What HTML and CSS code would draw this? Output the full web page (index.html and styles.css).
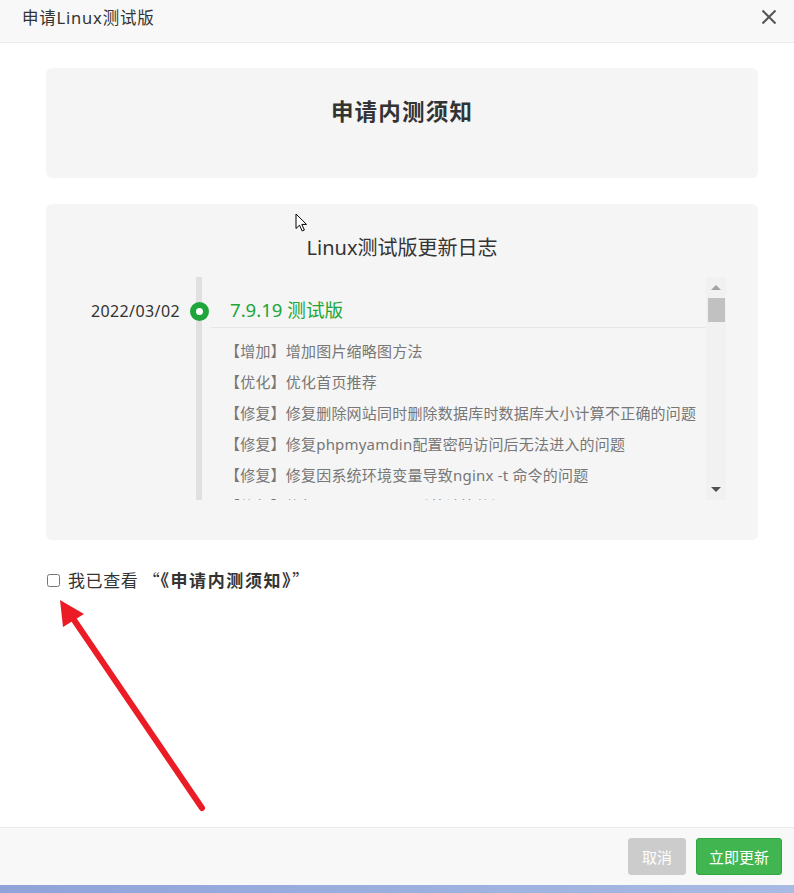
FILE: index.html
```html
<!DOCTYPE html>
<html lang="zh-CN">
<head>
<meta charset="utf-8">
<title>申请Linux测试版</title>
<link rel="stylesheet" href="styles.css">
</head>
<body>
<div class="modal">
  <div class="modal-head">
    <span class="modal-title">申请Linux测试版</span>
    <svg class="close" width="16" height="16" viewBox="0 0 16 16"><path d="M1.5 1.5 L14.5 14.5 M14.5 1.5 L1.5 14.5" stroke="#555" stroke-width="2" fill="none"/></svg>
  </div>
  <div class="modal-body">
    <div class="card card-notice">
      <h2 class="notice-title">申请内测须知</h2>
    </div>
    <div class="card card-log">
      <h3 class="log-title">Linux测试版更新日志</h3>
      <div class="log-box">
        <div class="log-date">2022/03/02</div>
        <div class="log-line"><span class="log-dot"></span></div>
        <div class="log-content">
          <div class="log-version">7.9.19 测试版</div>
          <ul class="log-items">
            <li>【增加】增加图片缩略图方法</li>
            <li>【优化】优化首页推荐</li>
            <li>【修复】修复删除网站同时删除数据库时数据库大小计算不正确的问题</li>
            <li>【修复】修复phpmyamdin配置密码访问后无法进入的问题</li>
            <li>【修复】修复因系统环境变量导致nginx -t 命令的问题</li>
            <li>【修复】修复LinuxProcess 系统计算的问题</li>
            <li>【修复】修复面板日志显示异常的问题</li>
          </ul>
        </div>
        <div class="scrollbar">
          <span class="sb-up"></span>
          <span class="sb-thumb"></span>
          <span class="sb-space"></span>
          <span class="sb-down"></span>
        </div>
      </div>
    </div>
    <label class="agree">
      <input type="checkbox" class="agree-box">
      <span>我已查看 “<b>《申请内测须知》</b>”</span>
    </label>
    <svg class="cursor" width="14" height="20" viewBox="0 0 14 20"><path d="M1 1 L1 15.5 L4.5 12.2 L7.2 18 L9.4 17 L6.8 11.4 L11.5 11.4 Z" fill="#fff" stroke="#000" stroke-width="1" stroke-linejoin="round"/></svg>
  </div>
  <div class="modal-foot">
    <button class="btn btn-cancel">取消</button>
    <button class="btn btn-ok">立即更新</button>
  </div>
</div>
<svg class="annot" width="794" height="893" viewBox="0 0 794 893">
  <line x1="202" y1="808" x2="72" y2="617" stroke="#ec1c26" stroke-width="6" stroke-linecap="round"/>
  <polygon points="60,600 63,627 84,614" fill="#ec1c26"/>
</svg>
</body>
</html>
```

FILE: styles.css
```css
* { box-sizing: border-box; }
html, body { margin: 0; padding: 0; }
body {
  width: 794px;
  height: 893px;
  overflow: hidden;
  position: relative;
  background: linear-gradient(90deg, #8fa3da, #a8bbe3);
  font-family: "Noto Sans", "Noto Sans CJK SC", sans-serif;
  color: #333;
}
.modal {
  height: 885px;
  background: #fff;
  display: flex;
  flex-direction: column;
}
.modal-head {
  height: 43px;
  flex: none;
  background: #f8f8f8;
  border-bottom: 1px solid #ececec;
  display: flex;
  align-items: flex-start;
  justify-content: space-between;
  padding: 0 17px 0 22px;
}
.modal-title {
  font-size: 16.5px;
  letter-spacing: 0.8px;
  line-height: 35px;
  color: #333;
}
.close { margin-top: 9px; }
.modal-body {
  flex: 1;
  position: relative;
  padding: 25px 36px 0 46px;
}
.card {
  background: #f5f5f5;
  border-radius: 6px;
}
.card-notice {
  height: 110px;
  padding-top: 29px;
}
.notice-title {
  margin: 0;
  text-align: center;
  font-size: 22.5px;
  letter-spacing: 1.2px;
  line-height: 30px;
  font-weight: bold;
  color: #333;
}
.card-log {
  margin-top: 26px;
  padding: 29px 32px 40px 0;
}
.log-title {
  margin: 0 0 14px 0;
  padding-left: 32px;
  text-align: center;
  font-size: 20px;
  line-height: 30px;
  font-weight: normal;
  color: #333;
}
.log-box {
  height: 223px;
  display: flex;
}
.log-date {
  width: 150px;
  flex: none;
  text-align: right;
  padding: 19px 16px 0 0;
  font-size: 16px;
  letter-spacing: 0.4px;
  line-height: 30px;
  color: #333;
}
.log-line {
  width: 6px;
  flex: none;
  background: #e0e0e0;
  position: relative;
}
.log-dot {
  position: absolute;
  left: -6.5px;
  top: 25px;
  width: 19px;
  height: 19px;
  border-radius: 50%;
  border: 6px solid #20a53a;
  background: #fff;
}
.log-content {
  flex: 1;
  overflow: hidden;
}
.log-version {
  margin-left: 9px;
  padding: 18px 0 2px 19px;
  line-height: 30px;
  font-size: 18.6px;
  color: #20a53a;
  border-bottom: 1px solid #e6e6e6;
}
.log-items {
  list-style: none;
  margin: 0;
  padding: 8px 0 0 23px;
}
.log-items li {
  font-size: 15px;
  letter-spacing: 0.2px;
  line-height: 31px;
  color: #777;
  white-space: nowrap;
}
.scrollbar {
  width: 20px;
  flex: none;
  background: #f1f1f1;
  display: flex;
  flex-direction: column;
  align-items: center;
}
.sb-up {
  margin-top: 8px;
  width: 0; height: 0;
  border-left: 5px solid transparent;
  border-right: 5px solid transparent;
  border-bottom: 5px solid #a3a3a3;
}
.sb-thumb {
  margin-top: 8px;
  width: 17px;
  height: 24px;
  background: #c1c1c1;
}
.sb-space { flex: 1; }
.sb-down {
  margin-bottom: 8px;
  width: 0; height: 0;
  border-left: 5px solid transparent;
  border-right: 5px solid transparent;
  border-top: 5px solid #505050;
}
.agree {
  display: flex;
  align-items: center;
  margin-top: 28px;
  line-height: 24px;
  font-family: "Noto Sans CJK SC", sans-serif;
  font-size: 17px;
  letter-spacing: 0.6px;
  color: #333;
}
.agree-box {
  width: 13px;
  height: 13px;
  margin: 0 8px 0 1px;
}
.agree b {
  font-weight: bold;
  letter-spacing: 1.6px;
}
.cursor {
  position: absolute;
  left: 295px;
  top: 170px;
}
.modal-foot {
  height: 58px;
  flex: none;
  background: #f8f8f8;
  border-top: 1px solid #e9e9e9;
  display: flex;
  justify-content: flex-end;
  align-items: flex-start;
  gap: 10px;
  padding: 10px 12px 0 0;
}
.btn {
  height: 37px;
  border-radius: 3px;
  font-family: "Noto Sans CJK SC", sans-serif;
  font-size: 15px;
  color: #fff;
  border: 1px solid transparent;
  cursor: pointer;
}
.btn-cancel {
  width: 58px;
  background: #cccccc;
  border-color: #cccccc;
}
.btn-ok {
  width: 86px;
  background: #41b650;
  border-color: #2fa63f;
}
.annot {
  position: absolute;
  left: 0;
  top: 0;
  pointer-events: none;
}
```
